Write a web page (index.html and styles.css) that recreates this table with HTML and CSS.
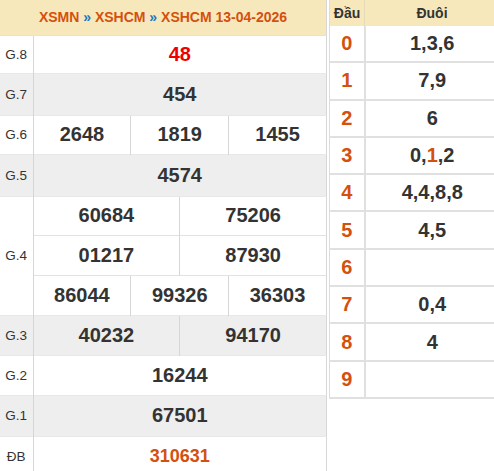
FILE: index.html
```html
<!DOCTYPE html>
<html lang="vi">
<head>
<meta charset="utf-8">
<title>XSHCM 13-04-2026</title>
<link rel="stylesheet" href="styles.css">
</head>
<body>
<div class="wrap">
  <table class="kq">
    <colgroup>
      <col class="c-label">
      <col><col><col><col><col><col>
    </colgroup>
    <tr class="head h35">
      <td colspan="7"><span class="lnk">XSMN</span> <span class="sep">»</span> <span class="lnk">XSHCM</span> <span class="sep">»</span> <span class="lnk">XSHCM 13-04-2026</span></td>
    </tr>
    <tr class="h38"><td class="lb">G.8</td><td colspan="6" class="n red">48</td></tr>
    <tr class="alt h42"><td class="lb">G.7</td><td colspan="6" class="n">454</td></tr>
    <tr class="h39"><td class="lb">G.6</td><td colspan="2" class="n">2648</td><td colspan="2" class="n">1819</td><td colspan="2" class="n">1455</td></tr>
    <tr class="alt h42"><td class="lb">G.5</td><td colspan="6" class="n">4574</td></tr>
    <tr class="h39"><td class="lb" rowspan="3">G.4</td><td colspan="3" class="n">60684</td><td colspan="3" class="n">75206</td></tr>
    <tr class="h40"><td colspan="3" class="n">01217</td><td colspan="3" class="n">87930</td></tr>
    <tr class="h40"><td colspan="2" class="n">86044</td><td colspan="2" class="n">99326</td><td colspan="2" class="n">36303</td></tr>
    <tr class="alt h40"><td class="lb">G.3</td><td colspan="3" class="n">40232</td><td colspan="3" class="n">94170</td></tr>
    <tr class="h40"><td class="lb">G.2</td><td colspan="6" class="n">16244</td></tr>
    <tr class="alt h41"><td class="lb">G.1</td><td colspan="6" class="n">67501</td></tr>
    <tr class="h40"><td class="lb">ĐB</td><td colspan="6" class="n db">310631</td></tr>
  </table>

  <table class="lt">
    <colgroup>
      <col class="c-dau">
      <col>
    </colgroup>
    <tr class="lt-head"><th>Đầu</th><th>Đuôi</th></tr>
    <tr><td class="dau">0</td><td class="duoi">1,3,6</td></tr>
    <tr><td class="dau">1</td><td class="duoi">7,9</td></tr>
    <tr><td class="dau">2</td><td class="duoi">6</td></tr>
    <tr><td class="dau">3</td><td class="duoi">0,<span class="hl">1</span>,2</td></tr>
    <tr><td class="dau">4</td><td class="duoi">4,4,8,8</td></tr>
    <tr><td class="dau">5</td><td class="duoi">4,5</td></tr>
    <tr><td class="dau">6</td><td class="duoi"></td></tr>
    <tr><td class="dau">7</td><td class="duoi">0,4</td></tr>
    <tr><td class="dau">8</td><td class="duoi">4</td></tr>
    <tr><td class="dau">9</td><td class="duoi"></td></tr>
  </table>
</div>
</body>
</html>
```

FILE: styles.css
```css
html, body {
  margin: 0;
  padding: 0;
  background: #fff;
  overflow: hidden;
}
body {
  font-family: "Liberation Sans", Arial, sans-serif;
  color: #333;
}
.wrap {
  display: flex;
  align-items: flex-start;
  gap: 2px;
  width: 510px;
}
table {
  border-collapse: collapse;
  table-layout: fixed;
}
.kq {
  width: 327px;
  flex: 0 0 327px;
  border-right: 1px solid #d6d6d6;
}
.c-label { width: 33px; }
.kq td {
  padding: 0;
  text-align: center;
  border-left: 1px solid #d6d6d6;
  border-top: 1px solid #e2e2e2;
}
.kq td.lb {
  border-left: none;
  font-size: 13.5px;
  color: #333;
}
.kq .head td {
  background: #f7e8bc;
  border: none;
  font-size: 14px;
  font-weight: bold;
  color: #d4500d;
}
.kq .head .sep { color: #1d78c4; }
.kq tr.alt td { background: #eeeeee; }
.kq tr.alt td, .kq tr.alt + tr td { border-top-color: #e8e8e8; }
.n {
  font-size: 20px;
  font-weight: bold;
  color: #333;
}
.n.red { color: #ee0000; }
.n.db { color: #d4500d; font-size: 18px; }
.h35 { height: 35px; }
.h38 { height: 38px; }
.h39 { height: 39px; }
.h40 { height: 40px; }
.h41 { height: 41px; }
.h42 { height: 42px; }

.lt {
  width: 170px;
  flex: 0 0 170px;
  border-left: 1px solid #dcdcdc;
}
.c-dau { width: 35px; }
.lt th {
  height: 26px;
  padding: 0;
  background: #f7e8bc;
  font-size: 14px;
  font-weight: bold;
  color: #333;
  text-align: center;
}
.lt th + th { border-left: 1px solid #e6dbb8; }
.lt td {
  height: 35.3px;
  padding: 0;
  text-align: center;
  font-size: 20px;
  font-weight: bold;
  border-bottom: 2px solid #e0e0e0;
}
.lt td.duoi { border-left: 2px solid #e0e0e0; color: #333; }
.lt td.dau { color: #d4500d; }
.lt .hl { color: #d4500d; }
```
